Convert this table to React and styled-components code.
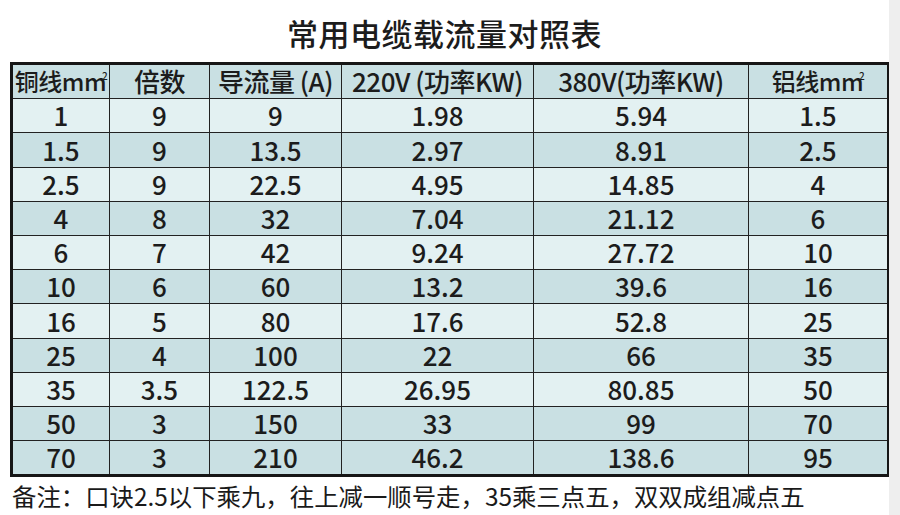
import React from "react";
import styled, { createGlobalStyle } from "styled-components";

const GlobalStyle = createGlobalStyle`
  html, body {
    margin: 0;
    padding: 0;
    background: #eeeeee;
  }
  body {
    font-family: "Noto Sans CJK SC", "Noto Sans", sans-serif;
    color: #1c1c1c;
  }
`;

const Page = styled.div`
  width: 889px;
  height: 515px;
  background: #ffffff;
  overflow: hidden;
  box-sizing: border-box;
  padding: 0 0 0 10px;
  display: flex;
  flex-direction: column;
`;

const Title = styled.h1`
  margin: 0;
  flex-shrink: 0;
  height: 62px;
  display: flex;
  align-items: center;
  justify-content: center;
  font-size: 31px;
  font-weight: 500;
  letter-spacing: 0.5px;
  padding-right: 10px;
  padding-top: 2px;
  box-sizing: border-box;
`;

const Table = styled.table`
  flex-shrink: 0;
  width: 877px;
  border-collapse: collapse;
  border: 3px solid #161616;
  table-layout: fixed;
`;

const Cell = styled.td`
  height: 33.2px;
  padding: 0;
  border: 1.5px solid #222;
  text-align: center;
  font-size: ${(p) => (p.$small ? "24px" : "26px")};
  font-weight: 500;
  line-height: 1.1;
  white-space: nowrap;
  letter-spacing: ${(p) => (p.$head ? "-0.5px" : "0")};
  background: ${(p) => (p.$dark ? "#c9e0e3" : "#e3f1f2")};
`;

const Sq = styled.sup`
  font-size: 10px;
  vertical-align: 11px;
  margin-left: -4px;
  line-height: 0;
`;

const Note = styled.p`
  margin: 4px 0 0 2px;
  flex-shrink: 0;
  font-size: 24.4px;
  line-height: 1.2;
  font-weight: 400;
  white-space: nowrap;
  color: #1a1a1a;
`;

const widths = [98, 100, 132, 192, 215, 140];

const rows = [
  ["1", "9", "9", "1.98", "5.94", "1.5"],
  ["1.5", "9", "13.5", "2.97", "8.91", "2.5"],
  ["2.5", "9", "22.5", "4.95", "14.85", "4"],
  ["4", "8", "32", "7.04", "21.12", "6"],
  ["6", "7", "42", "9.24", "27.72", "10"],
  ["10", "6", "60", "13.2", "39.6", "16"],
  ["16", "5", "80", "17.6", "52.8", "25"],
  ["25", "4", "100", "22", "66", "35"],
  ["35", "3.5", "122.5", "26.95", "80.85", "50"],
  ["50", "3", "150", "33", "99", "70"],
  ["70", "3", "210", "46.2", "138.6", "95"],
];

const headers = [
  { label: <>铜线mm<Sq>2</Sq></>, small: true },
  { label: "倍数" },
  { label: "导流量 (A)" },
  { label: "220V (功率KW)" },
  { label: "380V(功率KW)" },
  { label: <>铝线mm<Sq>2</Sq></>, small: true },
];

export default function App() {
  return (
    <>
      <GlobalStyle />
      <Page>
        <Title>常用电缆载流量对照表</Title>
        <Table>
          <colgroup>
            {widths.map((w, i) => (
              <col key={i} style={{ width: w }} />
            ))}
          </colgroup>
          <thead>
            <tr>
              {headers.map((h, i) => (
                <Cell as="th" key={i} $head $dark $small={h.small}>
                  {h.label}
                </Cell>
              ))}
            </tr>
          </thead>
          <tbody>
            {rows.map((r, i) => (
              <tr key={i}>
                {r.map((v, j) => (
                  <Cell key={j} $dark={i % 2 === 1 || i === rows.length - 1}>
                    {v}
                  </Cell>
                ))}
              </tr>
            ))}
          </tbody>
        </Table>
        <Note>备注：口诀2.5以下乘九，往上减一顺号走，35乘三点五，双双成组减点五</Note>
      </Page>
    </>
  );
}
